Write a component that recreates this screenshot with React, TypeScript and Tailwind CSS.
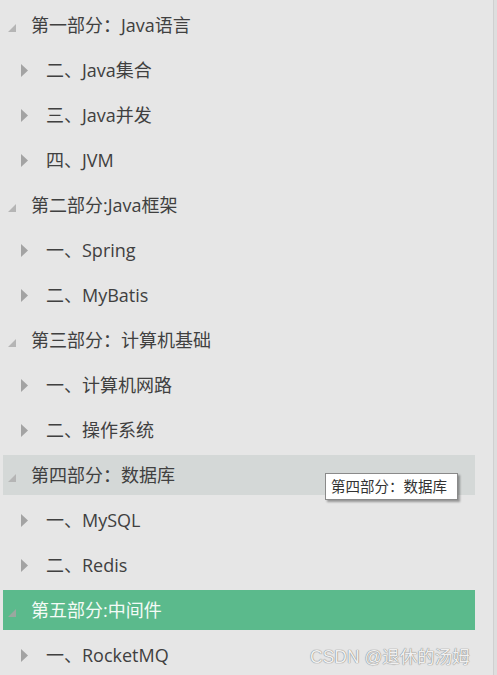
const rows: { label: string; level: 0 | 1; state?: 'hover' | 'active' }[] = [
  { label: '第一部分：Java语言', level: 0 },
  { label: '二、Java集合', level: 1 },
  { label: '三、Java并发', level: 1 },
  { label: '四、JVM', level: 1 },
  { label: '第二部分:Java框架', level: 0 },
  { label: '一、Spring', level: 1 },
  { label: '二、MyBatis', level: 1 },
  { label: '第三部分：计算机基础', level: 0 },
  { label: '一、计算机网路', level: 1 },
  { label: '二、操作系统', level: 1 },
  { label: '第四部分：数据库', level: 0, state: 'hover' },
  { label: '一、MySQL', level: 1 },
  { label: '二、Redis', level: 1 },
  { label: '第五部分:中间件', level: 0, state: 'active' },
  { label: '一、RocketMQ', level: 1 },
];

const Expanded = ({ light }: { light?: boolean }) => (
  <svg width="8" height="8" viewBox="0 0 8 8" className="shrink-0">
    <polygon points="8,0 8,8 0,8" fill={light ? '#9aa89f' : '#b5b5b5'} />
  </svg>
);

const Collapsed = () => (
  <svg width="7" height="13" viewBox="0 0 7 13" className="shrink-0">
    <polygon points="0,0 7,6.5 0,13" fill="#a3a3a3" />
  </svg>
);

export default function App() {
  return (
    <div
      className="relative flex w-[497px] h-[675px] overflow-hidden bg-[#e6e6e6] text-[#404040]"
      style={{ fontFamily: '"Open Sans", "Noto Sans CJK SC", sans-serif' }}
    >
      <div className="flex flex-col gap-[5px] pt-[5px] w-[493px]">
        {rows.map((r, i) => {
          const bg =
            r.state === 'hover' ? 'bg-[#d4d8d7]' : r.state === 'active' ? 'bg-[#5bba8c] text-[#f4fbf6]' : '';
          return (
            <div key={i} className={`ml-[3px] w-[472px] h-10 shrink-0 flex items-center ${bg}`}>
              {r.level === 0 ? (
                <>
                  <span className="ml-[5px] mt-[6px] flex"><Expanded light={r.state === 'active'} /></span>
                  <span className="ml-[15px] text-[18px] leading-none">{r.label}</span>
                </>
              ) : (
                <>
                  <span className="ml-[18px] flex"><Collapsed /></span>
                  <span className="ml-[18px] text-[18px] leading-none">{r.label}</span>
                </>
              )}
            </div>
          );
        })}
      </div>
      <div className="w-[4px] h-full border-l border-[#d0d0d0] bg-[#dedede]" />

      <div className="absolute left-[325px] top-[473px] w-[133px] h-[27px] px-[5px] flex items-center bg-white border border-[#8a8a8a] shadow-[2px_2px_2px_rgba(0,0,0,0.35)] text-[14.5px] text-[#333] whitespace-nowrap">
        第四部分：数据库
      </div>

      <div
        className="absolute left-[310px] top-[644px] text-[17.5px] text-[#f0f0f0] whitespace-nowrap"
        style={{ fontFamily: '"Liberation Sans", "Noto Sans CJK SC", sans-serif', textShadow: '0 0 1px #808080, 0 0 1px #808080' }}
      >
        CSDN @退休的汤姆
      </div>
    </div>
  );
}
